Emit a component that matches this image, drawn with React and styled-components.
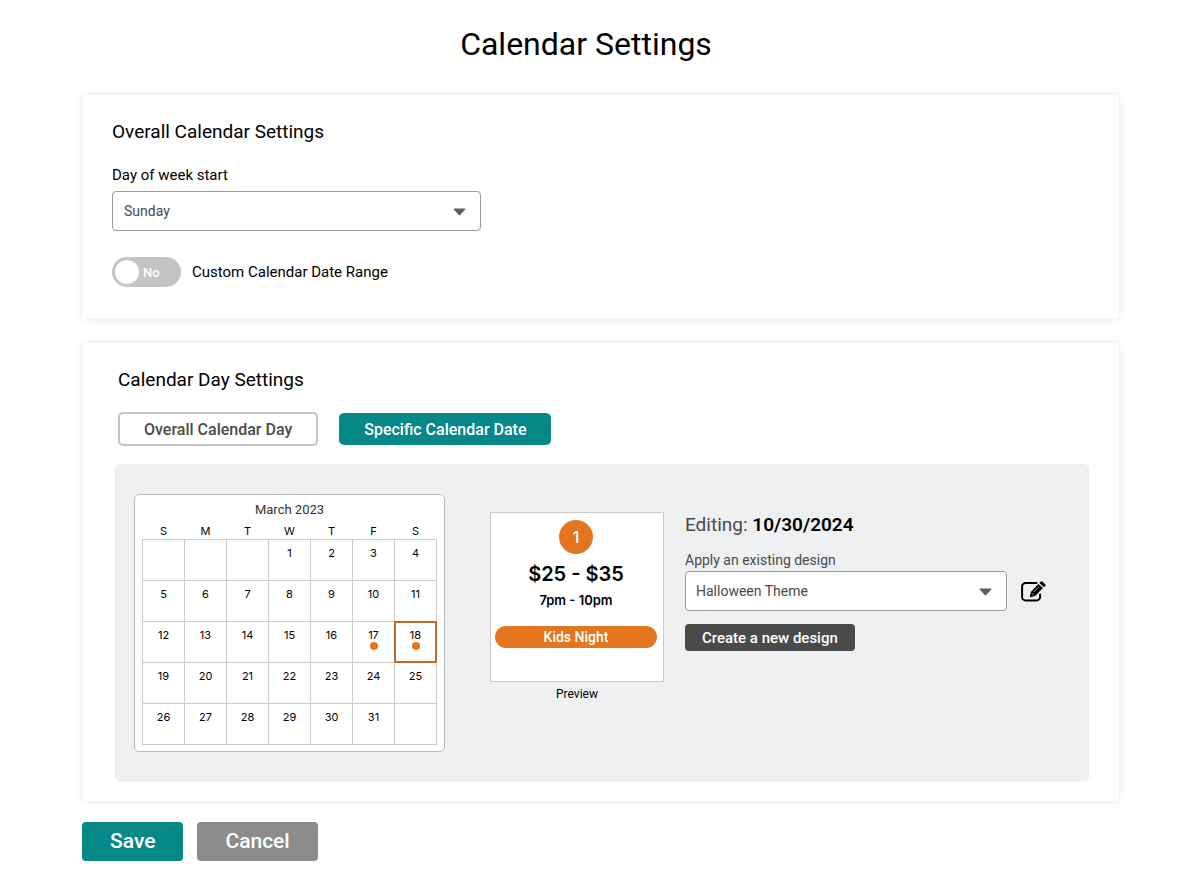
import React, { useState } from 'react';
import styled, { createGlobalStyle } from 'styled-components';

const GlobalStyle = createGlobalStyle`
  * {
    box-sizing: border-box;
  }

  body {
    margin: 0;
    background: #fff;
    color: #000;
    font-family: Roboto, sans-serif;
    font-size: 14px;
  }

  button, select, input {
    font-family: inherit;
  }
`;

const Page = styled.main`
  padding: 24px 80px 24px 82px;
`;

const Title = styled.h1`
  margin: 0 29px 31px 0;
  font-size: 32px;
  font-weight: 400;
  line-height: 40px;
  text-align: center;
`;

const Card = styled.section`
  margin-bottom: 24px;
  padding: ${props => props.$padding};
  background: #fff;
  box-shadow: 0 0 8px rgba(0, 0, 0, .1);
`;

const CardTitle = styled.h2`
  margin: 0;
  font-size: 19px;
  font-weight: 400;
  line-height: 24px;
`;

const Label = styled.label`
  display: block;
  font-size: ${props => (props.$muted ? '14px' : '15px')};
  line-height: 20px;
  color: ${props => (props.$muted ? '#4a4a4a' : '#000')};
`;

const DayStart = styled.div`
  max-width: 369px;
  margin: 21px 0 26px;

  ${Label} {
    margin-bottom: 6px;
  }
`;

const SelectWrap = styled.div`
  position: relative;
  flex: 1;
`;

const SelectBox = styled.select`
  display: block;
  width: 100%;
  height: 40px;
  padding: 0 40px 0 ${props => (props.$tight ? '10px' : '11px')};
  appearance: none;
  background: #fff;
  border: 1px solid #999;
  border-radius: 4px;
  color: #4a4a4a;
  font-size: 14px;
`;

const Arrow = styled.svg`
  position: absolute;
  top: 17px;
  right: 15px;
  width: 13px;
  height: 8px;
  fill: #5f5f5f;
  pointer-events: none;
`;

const ToggleRow = styled.label`
  display: flex;
  align-items: center;
  gap: 11px;
  width: fit-content;
  font-size: 15px;
  cursor: pointer;
`;

const ToggleInput = styled.input`
  position: absolute;
  opacity: 0;
`;

const Track = styled.span`
  display: flex;
  flex-direction: ${props => (props.$on ? 'row-reverse' : 'row')};
  align-items: center;
  gap: 4px;
  width: 69px;
  height: 30px;
  padding: 0 3px;
  border-radius: 15px;
  background: ${props => (props.$on ? '#078888' : '#c4c4c4')};
  color: #fff;
  font-size: 13px;
  font-weight: 500;
`;

const Knob = styled.span`
  width: 24px;
  height: 24px;
  border-radius: 50%;
  background: #fff;
`;

const DayHeader = styled.div`
  padding-left: 3px;
`;

const Tabs = styled.div`
  display: flex;
  gap: 21px;
  margin: 20px 0 18px;
`;

const Tab = styled.button`
  height: 34px;
  padding: 0 ${props => (props.$active ? '25px' : '24px')};
  border: 2px solid ${props => (props.$active ? '#fff' : '#c4c4c4')};
  border-width: ${props => (props.$active ? '1px 0' : '2px')};
  border-radius: 5px;
  background: ${props => (props.$active ? '#078888' : '#fff')};
  background-clip: padding-box;
  color: ${props => (props.$active ? '#fff' : '#4a4a4a')};
  font-size: 16px;
  font-weight: 500;
`;

const Panel = styled.div`
  display: flex;
  align-items: flex-start;
  padding: 30px 19px;
  border-radius: 5px;
  background: #eff0f2;
`;

const CalendarBox = styled.div`
  flex: 0 0 311px;
  padding: 7px 7px 6px;
  border: 1px solid #b9babb;
  border-radius: 5px;
  background: #fff;
`;

const Month = styled.table`
  width: 100%;
  table-layout: fixed;
  border-collapse: collapse;
  font-family: Inter, sans-serif;
  font-size: 11px;

  caption {
    color: #333;
    font-family: Roboto, sans-serif;
    font-size: 13px;
    line-height: 16px;
  }

  th {
    height: 21px;
    padding: 6px 0 0;
    font-weight: 400;
    line-height: 14px;
  }

  td {
    height: 41px;
    padding: 0;
    border: 1px solid #ccc;
  }
`;

const Day = styled.button`
  display: flex;
  flex-direction: column;
  align-items: center;
  width: 100%;
  height: 40px;
  padding: 6px 0 0;
  border: 0;
  outline: ${props => (props.$selected ? '2px solid #bf6a28' : 'none')};
  outline-offset: -1px;
  background: none;
  color: #000;
  font-family: inherit;
  font-size: 11px;
  line-height: 14px;
`;

const Dot = styled.span`
  width: 8px;
  height: 8px;
  border-radius: 50%;
  background: #e4761f;
`;

const Preview = styled.figure`
  flex: 0 0 174px;
  margin: 18px 21px 0 45px;
`;

const PreviewCard = styled.div`
  display: flex;
  flex-direction: column;
  align-items: center;
  height: 170px;
  padding: 7px 6px 7px 4px;
  border: 1px solid #c8c9ca;
  background: #fff;
  font-family: Inter, sans-serif;
  font-weight: 600;
`;

const DayNumber = styled.span`
  width: 34px;
  height: 34px;
  border-radius: 50%;
  background: #e4761f;
  color: #fff;
  font-size: 16px;
  font-weight: 500;
  line-height: 34px;
  text-align: center;
`;

const Price = styled.span`
  margin-top: 6px;
  font-size: 20px;
  line-height: 28px;
`;

const Hours = styled.span`
  margin-top: 4px;
  font-size: 13px;
  line-height: 16px;
`;

const EventName = styled.span`
  align-self: stretch;
  margin-top: 18px;
  border-radius: 11px;
  background: #e4761f;
  color: #fff;
  font-family: Roboto, sans-serif;
  font-size: 14px;
  font-weight: 500;
  line-height: 22px;
  text-align: center;
`;

const PreviewCaption = styled.figcaption`
  margin-top: 4px;
  font-size: 12px;
  line-height: 16px;
  text-align: center;
`;

const Editor = styled.div`
  flex: 1;
  max-width: 361px;
  padding-top: 19px;
`;

const Editing = styled.p`
  margin: 0 0 13px;
  color: #4a4a4a;
  font-size: 19px;
  line-height: 24px;

  strong {
    color: #000;
    font-weight: 600;
  }
`;

const DesignRow = styled.div`
  display: flex;
  align-items: center;
  gap: 14px;
  margin: 1px 0 13px;
`;

const IconButton = styled.button`
  display: flex;
  padding: 0;
  border: 0;
  background: none;
  color: #000;
`;

const CreateButton = styled.button`
  height: 27px;
  padding: 0 17px;
  border: 0;
  border-radius: 4px;
  background: #4a4a4a;
  color: #fff;
  font-size: 15px;
  font-weight: 500;
`;

const Actions = styled.div`
  display: flex;
  gap: 14px;
  margin-top: -3px;
`;

const Action = styled.button`
  height: 39px;
  padding: 0 28px;
  border: 0;
  border-radius: 4px;
  background: ${props => (props.$primary ? '#078888' : '#8c8c8c')};
  color: #fff;
  font-size: 21px;
  font-weight: 500;
`;

const weekdays = ['S', 'M', 'T', 'W', 'T', 'F', 'S'];
const eventDays = [17, 18];

// March 2023 starts on a Wednesday
const weeks = [0, 1, 2, 3, 4].map(week =>
  weekdays.map((name, i) => {
    const day = week * 7 + i - 2;
    return day > 0 && day <= 31 ? day : null;
  })
);

function Select({ id, tight, options }) {
  return (
    <SelectWrap>
      <SelectBox id={id} $tight={tight}>
        {options.map(option => <option key={option}>{option}</option>)}
      </SelectBox>
      <Arrow viewBox="0 0 13 8" aria-hidden="true">
        <path d="M1.2 .5h10.6q1 0 .4.9L7.5 6.8q-1 1-2 0L.8 1.4Q.2.5 1.2.5z" />
      </Arrow>
    </SelectWrap>
  );
}

function EditIcon() {
  return (
    <svg width="25" height="21" viewBox="0 0 25 21" aria-hidden="true">
      <path
        d="M15.5 1.9H4.6A3.5 3.5 0 0 0 1.1 5.4v10.5a3.5 3.5 0 0 0 3.5 3.5h11a3.5 3.5 0 0 0 3.5-3.5v-2.4"
        fill="none"
        stroke="currentColor"
        strokeWidth="2"
        strokeLinecap="round"
      />
      <path d="M17.4 2.9l4.5 4.2-7.7 8-5.4 1.2 1-5.3z" fill="currentColor" />
      <path d="M18.4 1.9l1.3-1.2q.9-.8 1.8 0l2.7 2.5q.8.9 0 1.8l-1.3 1.2z" fill="currentColor" />
      <path d="M12.7 11l5.2-5.3M10.6 12.2l2.1 2" fill="none" stroke="#eff0f2" strokeWidth=".7" />
    </svg>
  );
}

function Calendar() {
  const [selected, setSelected] = useState(18);

  return (
    <CalendarBox>
      <Month>
        <caption>March 2023</caption>
        <thead>
          <tr>{weekdays.map((name, i) => <th key={i} scope="col">{name}</th>)}</tr>
        </thead>
        <tbody>
          {weeks.map((week, w) => (
            <tr key={w}>
              {week.map((day, i) => (
                <td key={i}>
                  {day && (
                    <Day type="button" $selected={day === selected} onClick={() => setSelected(day)}>
                      {day}
                      {eventDays.includes(day) && <Dot />}
                    </Day>
                  )}
                </td>
              ))}
            </tr>
          ))}
        </tbody>
      </Month>
    </CalendarBox>
  );
}

function App() {
  const [customRange, setCustomRange] = useState(false);
  const [tab, setTab] = useState('specific');

  return (
    <>
      <GlobalStyle />
      <Page>
        <Title>Calendar Settings</Title>

        <Card $padding="25px 30px 32px">
          <CardTitle>Overall Calendar Settings</CardTitle>
          <DayStart>
            <Label htmlFor="week-start">Day of week start</Label>
            <Select id="week-start" options={['Sunday', 'Monday']} />
          </DayStart>
          <ToggleRow>
            <ToggleInput
              type="checkbox"
              checked={customRange}
              onChange={e => setCustomRange(e.target.checked)}
            />
            <Track $on={customRange}>
              <Knob />
              {customRange ? 'Yes' : 'No'}
            </Track>
            Custom Calendar Date Range
          </ToggleRow>
        </Card>

        <Card $padding="25px 30px 19px 33px">
          <DayHeader>
            <CardTitle>Calendar Day Settings</CardTitle>
            <Tabs>
              <Tab type="button" $active={tab === 'overall'} onClick={() => setTab('overall')}>
                Overall Calendar Day
              </Tab>
              <Tab type="button" $active={tab === 'specific'} onClick={() => setTab('specific')}>
                Specific Calendar Date
              </Tab>
            </Tabs>
          </DayHeader>

          <Panel>
            <Calendar />
            <Preview>
              <PreviewCard>
                <DayNumber>1</DayNumber>
                <Price>$25 - $35</Price>
                <Hours>7pm - 10pm</Hours>
                <EventName>Kids Night</EventName>
              </PreviewCard>
              <PreviewCaption>Preview</PreviewCaption>
            </Preview>
            <Editor>
              <Editing>Editing: <strong>10/30/2024</strong></Editing>
              <Label htmlFor="design" $muted>Apply an existing design</Label>
              <DesignRow>
                <Select id="design" tight options={['Halloween Theme']} />
                <IconButton type="button" aria-label="Edit design">
                  <EditIcon />
                </IconButton>
              </DesignRow>
              <CreateButton type="button">Create a new design</CreateButton>
            </Editor>
          </Panel>
        </Card>

        <Actions>
          <Action type="button" $primary>Save</Action>
          <Action type="button">Cancel</Action>
        </Actions>
      </Page>
    </>
  );
}

export default App;
